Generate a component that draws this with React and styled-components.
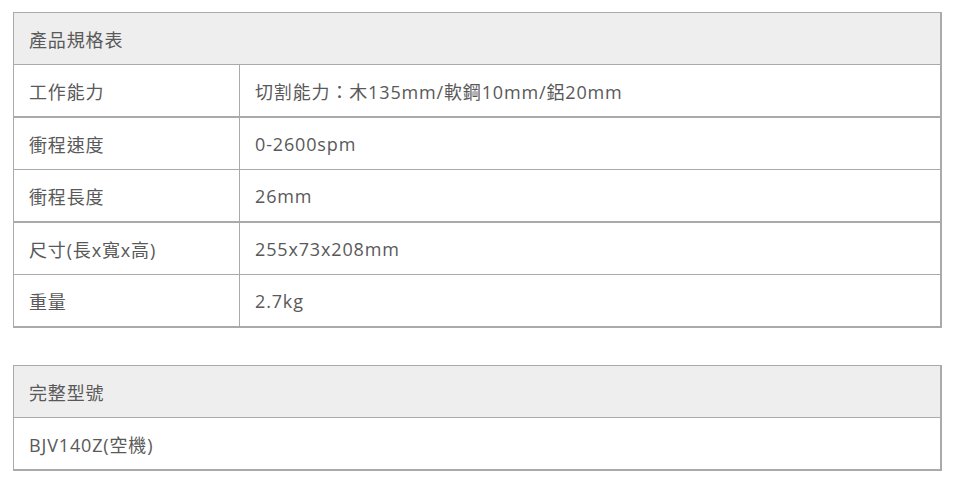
import styled, { createGlobalStyle } from "styled-components";

const GlobalStyle = createGlobalStyle`
  body {
    margin: 0;
    background: #fff;
  }
`;

const Page = styled.div`
  display: flex;
  flex-direction: column;
  gap: 37px;
  padding: 12px 13px 0 13px;
  font-family: "Open Sans", "Noto Sans CJK TC", sans-serif;
  font-size: 18px;
  letter-spacing: 0.85px;
  color: #595959;
`;

const SpecTable = styled.table`
  width: 100%;
  border-collapse: collapse;
  border-left: 1px solid #aaa;
  border-top: 1px solid #aaa;
  border-right: 2px solid #aaa;
  border-bottom: 2px solid #aaa;
  table-layout: fixed;
`;

const LabelCol = styled.col`
  width: 226px;
`;

const Row = styled.tr`
  height: 52.5px;
  border-top: ${(p) => (p.$thick ? 2 : 1)}px solid #aaa;
`;

const HeadCell = styled.th`
  background: #eeeeee;
  text-align: left;
  font-weight: 400;
  padding: 0 15px;
  height: 51px;
`;

const LabelCell = styled.td`
  padding: 0 15px;
  border-right: 1px solid #aaa;
`;

const ValueCell = styled.td`
  padding: 0 15px;
`;

const specs = [
  ["工作能力", "切割能力：木135mm/軟鋼10mm/鋁20mm", false],
  ["衝程速度", "0-2600spm", true],
  ["衝程長度", "26mm", false],
  ["尺寸(長x寬x高)", "255x73x208mm", true],
  ["重量", "2.7kg", false],
];

export default function App() {
  return (
    <>
      <GlobalStyle />
      <Page>
        <SpecTable>
          <colgroup>
            <LabelCol />
            <col />
          </colgroup>
          <thead>
            <tr>
              <HeadCell colSpan={2}>產品規格表</HeadCell>
            </tr>
          </thead>
          <tbody>
            {specs.map(([label, value, thick]) => (
              <Row key={label} $thick={thick}>
                <LabelCell>{label}</LabelCell>
                <ValueCell>{value}</ValueCell>
              </Row>
            ))}
          </tbody>
        </SpecTable>
        <SpecTable>
          <thead>
            <tr>
              <HeadCell>完整型號</HeadCell>
            </tr>
          </thead>
          <tbody>
            <Row>
              <ValueCell>BJV140Z(空機)</ValueCell>
            </Row>
          </tbody>
        </SpecTable>
      </Page>
    </>
  );
}
